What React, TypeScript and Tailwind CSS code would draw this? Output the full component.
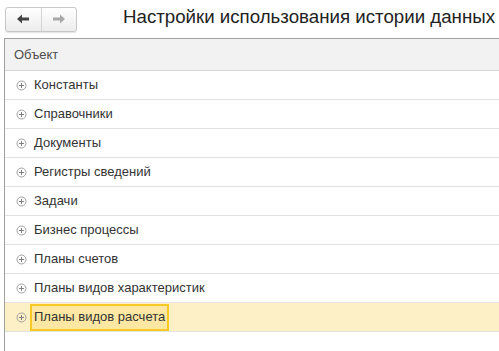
import React from 'react';

const rows = [
  'Константы',
  'Справочники',
  'Документы',
  'Регистры сведений',
  'Задачи',
  'Бизнес процессы',
  'Планы счетов',
  'Планы видов характеристик',
  'Планы видов расчета',
];

function PlusIcon() {
  return (
    <svg width="11" height="11" viewBox="0 0 11 11" className="shrink-0">
      <circle cx="5.5" cy="5.5" r="4.5" fill="none" stroke="#a0a0a0" strokeWidth="1" />
      <path d="M3 5.5h5M5.5 3v5" stroke="#808080" strokeWidth="1" />
    </svg>
  );
}

export default function App() {
  return (
    <div className="w-[499px] h-[351px] bg-white overflow-hidden text-[#333] font-['Liberation_Sans',Arial,sans-serif]">
      {/* toolbar */}
      <div className="flex items-center h-[38px] pl-[5px]">
        <div className="flex h-[25px] w-[72px] rounded-[3px] border border-[#c8c8c8] bg-gradient-to-b from-white to-[#ececec] shadow-[0_1px_1px_rgba(0,0,0,0.12)]">
          <div className="flex-1 flex items-center justify-center border-r border-[#d4d4d4]">
            <svg width="14" height="10" viewBox="0 0 14 10">
              <path d="M1 5l5-4.5v3h7v3H6v3z" fill="#444" />
            </svg>
          </div>
          <div className="flex-1 flex items-center justify-center">
            <svg width="14" height="10" viewBox="0 0 14 10">
              <path d="M13 5L8 .5v3H1v3h7v3z" fill="#a8a8a8" />
            </svg>
          </div>
        </div>
        <h1 className="ml-[46px] text-[18.7px] leading-none text-[#222] whitespace-nowrap -mt-[4px]">
          Настройки использования истории данных
        </h1>
      </div>

      {/* table */}
      <div className="ml-[4px] border-l border-t border-[#a0a0a0] h-[313px]">
        <div className="h-[32px] bg-[#f2f2f2] border-b border-[#d6d6d6] flex items-center pl-[9px] text-[13px] text-[#4d4d4d]">
          Объект
        </div>
        {rows.map((r, i) => {
          const selected = i === rows.length - 1;
          return (
            <div
              key={r}
              className={`h-[29px] border-b border-[#e2e2e2] flex items-center pl-[11px] text-[13px] ${
                selected ? 'bg-[#fdf0c6]' : ''
              }`}
            >
              <PlusIcon />
              <span
                className={`ml-[3px] px-[2px] h-[27px] flex items-center border-2 ${
                  selected ? 'border-[#f7c924] bg-[#fde7a2]' : 'border-transparent'
                }`}
              >
                {r}
              </span>
            </div>
          );
        })}
      </div>
    </div>
  );
}
